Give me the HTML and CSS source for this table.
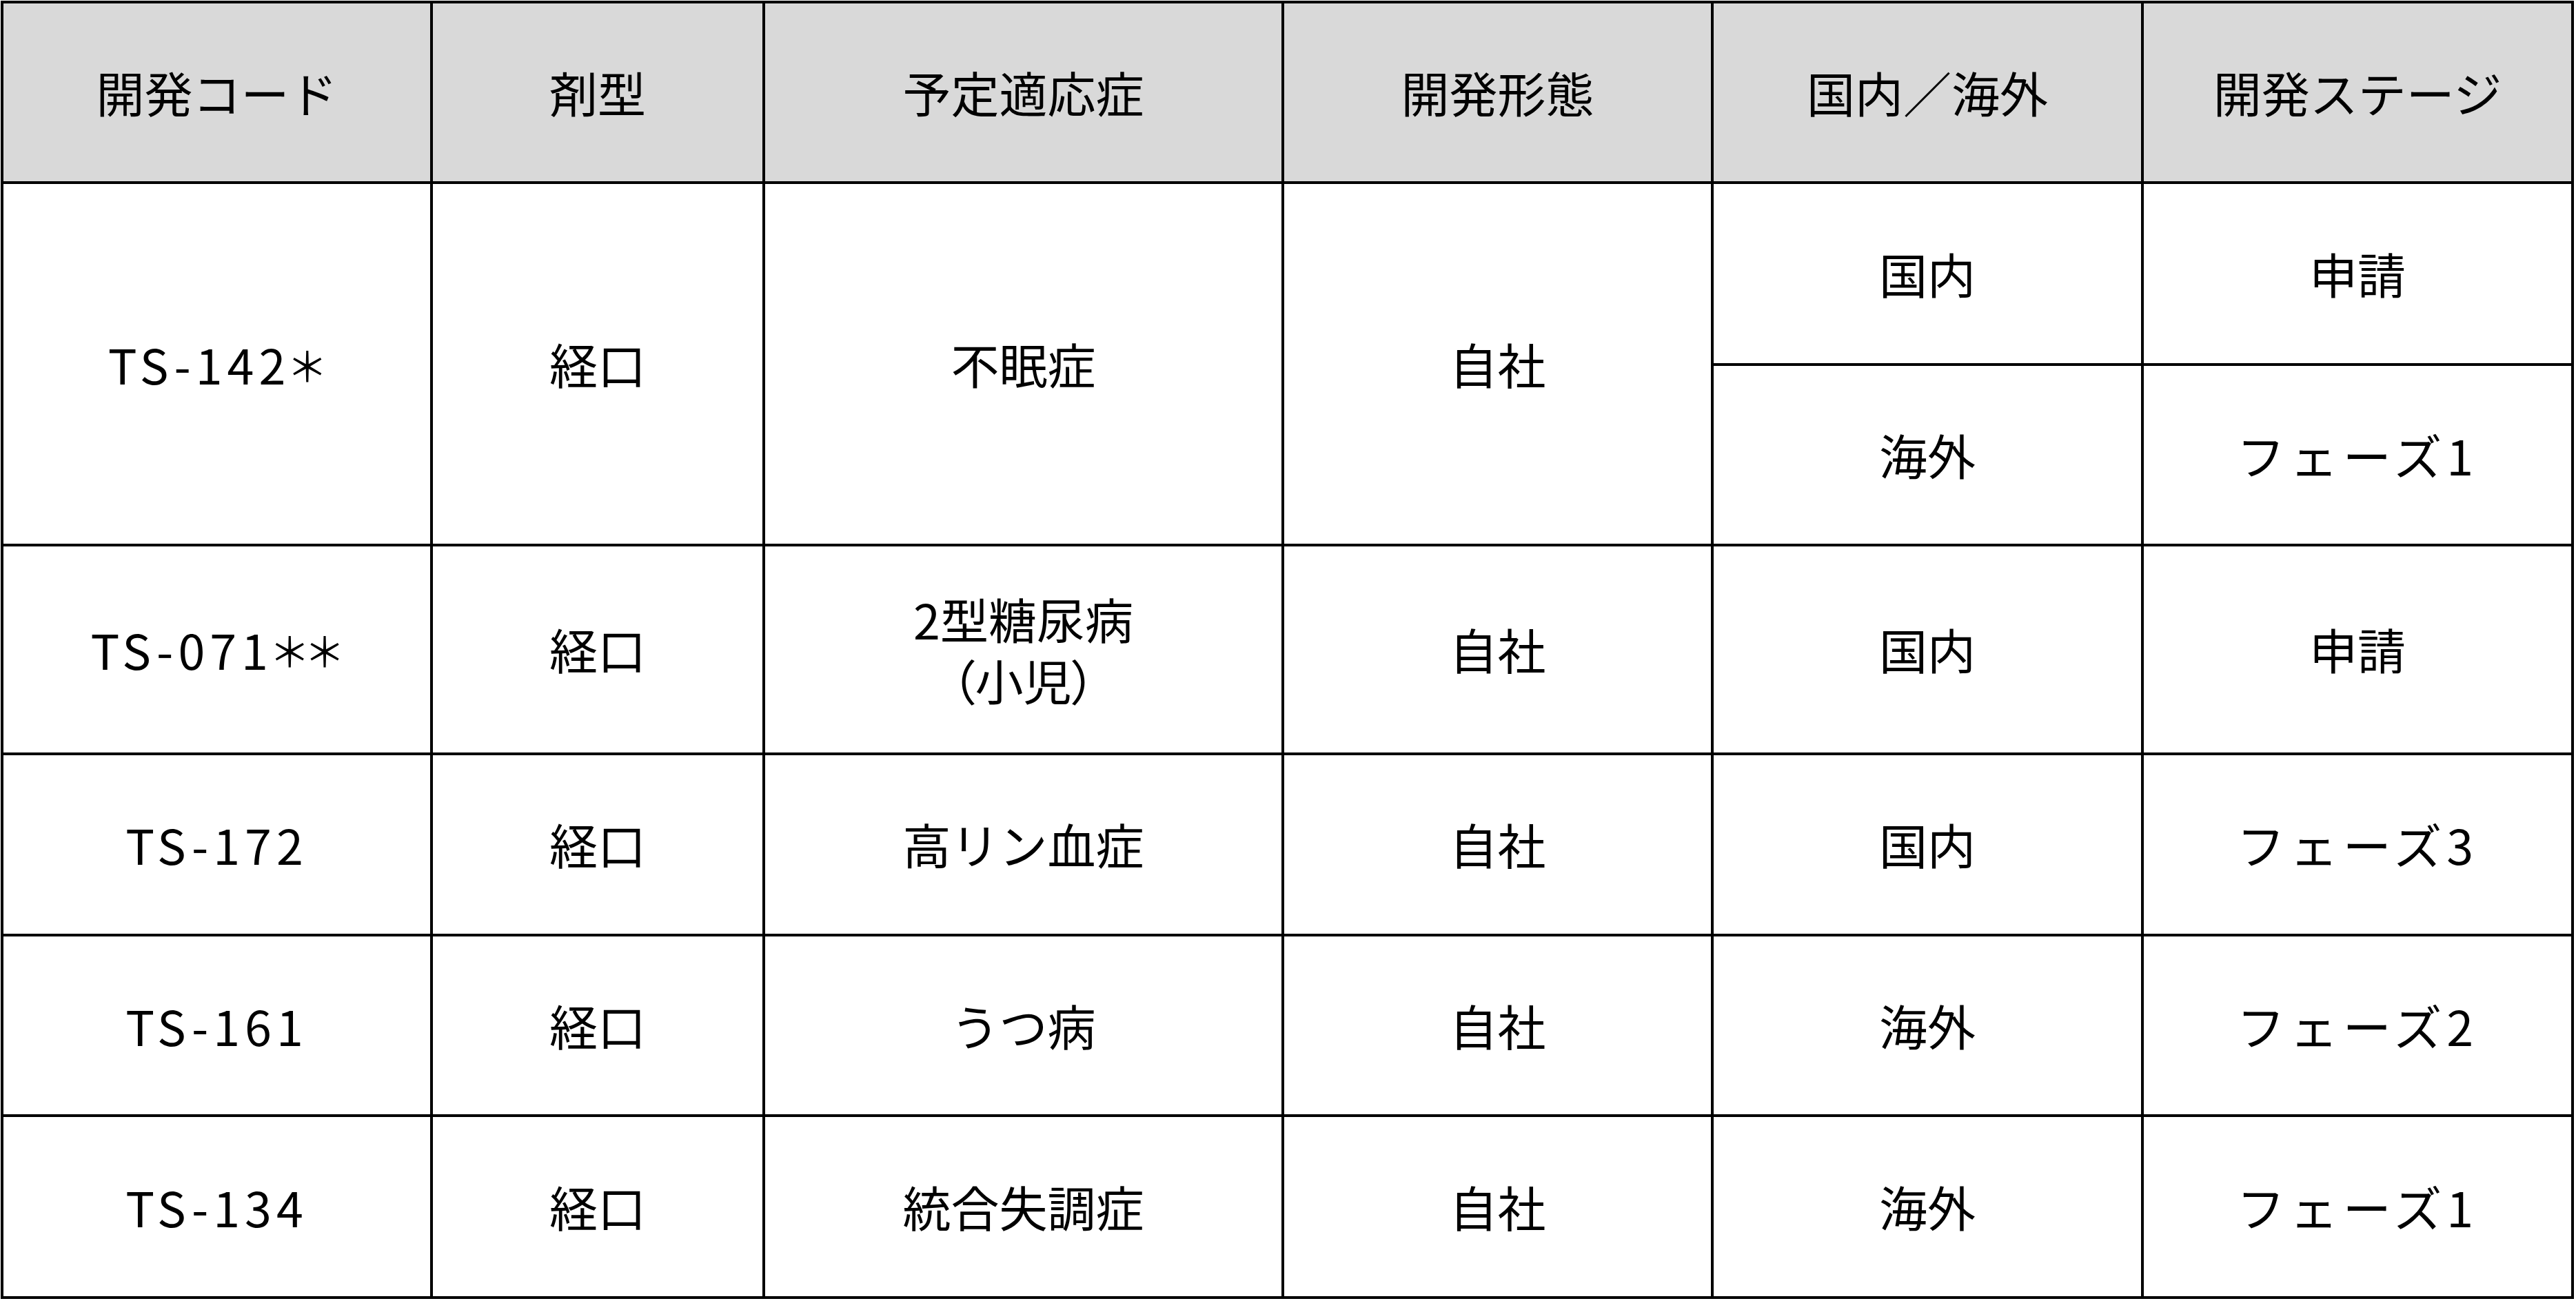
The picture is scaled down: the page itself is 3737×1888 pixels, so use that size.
FILE: index.html
```html
<!DOCTYPE html>
<html lang="ja">
<head>
<meta charset="utf-8">
<title>開発パイプライン</title>
<link rel="stylesheet" href="styles.css">
</head>
<body>
<div class="grid">
  <div class="cell head">開発コード</div>
  <div class="cell head">剤型</div>
  <div class="cell head">予定適応症</div>
  <div class="cell head">開発形態</div>
  <div class="cell head">国内／海外</div>
  <div class="cell head">開発ステージ</div>

  <div class="cell span2 latin">TS-142<span class="ast">＊</span></div>
  <div class="cell span2">経口</div>
  <div class="cell span2">不眠症</div>
  <div class="cell span2">自社</div>
  <div class="cell">国内</div>
  <div class="cell">申請</div>
  <div class="cell">海外</div>
  <div class="cell latin">フェーズ1</div>

  <div class="cell latin">TS-071<span class="ast">＊＊</span></div>
  <div class="cell">経口</div>
  <div class="cell"><p class="txt">2型糖尿病<br><span class="palt">（小児）</span></p></div>
  <div class="cell">自社</div>
  <div class="cell">国内</div>
  <div class="cell">申請</div>

  <div class="cell latin">TS-172</div>
  <div class="cell">経口</div>
  <div class="cell">高リン血症</div>
  <div class="cell">自社</div>
  <div class="cell">国内</div>
  <div class="cell latin">フェーズ3</div>

  <div class="cell latin">TS-161</div>
  <div class="cell">経口</div>
  <div class="cell">うつ病</div>
  <div class="cell">自社</div>
  <div class="cell">海外</div>
  <div class="cell latin">フェーズ2</div>

  <div class="cell latin">TS-134</div>
  <div class="cell">経口</div>
  <div class="cell">統合失調症</div>
  <div class="cell">自社</div>
  <div class="cell">海外</div>
  <div class="cell latin">フェーズ1</div>
</div>
</body>
</html>
```

FILE: styles.css
```css
html, body {
  margin: 0;
  padding: 0;
  background: #ffffff;
}

body {
  font-family: "Noto Sans CJK JP", "Noto Sans", sans-serif;
  color: #000000;
}

.grid {
  margin: 1px;
  width: 3733px;
  box-sizing: border-box;
  display: grid;
  grid-template-columns: 619px 478px 749px 619px 620px 620px;
  grid-template-rows: 258px 260px 258px 299px 259px 258px 260px;
  gap: 4px;
  padding: 4px;
  background: #000000;
}

.cell {
  background: #ffffff;
  display: flex;
  align-items: center;
  justify-content: center;
  text-align: center;
  font-size: 70px;
  line-height: 1.26;
}

.head {
  background: #d9d9d9;
}

.span2 {
  grid-row: span 2;
}

.txt {
  margin: 0;
}

.latin {
  letter-spacing: 7px;
}

.ast {
  font-feature-settings: "palt";
  font-size: 0.85em;
  letter-spacing: 2px;
}

.palt {
  font-feature-settings: "palt";
}
```
